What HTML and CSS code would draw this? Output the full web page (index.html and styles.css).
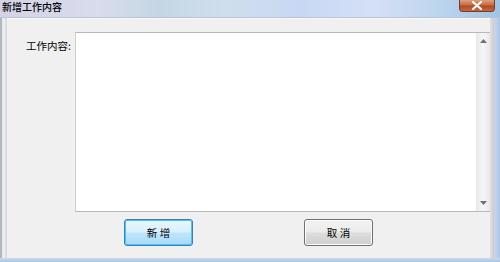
FILE: index.html
```html
<!DOCTYPE html>
<html>
<head>
<meta charset="utf-8">
<link rel="stylesheet" href="styles.css">
</head>
<body>
<div class="window">
  <div class="titlebar">
    <span class="title">新增工作内容</span>
    <span class="close"><svg width="12" height="9" viewBox="0 0 12 9"><path d="M2 1 L10 8 M10 1 L2 8" stroke="#fff" stroke-width="2.2" stroke-linecap="round"/></svg></span>
  </div>
  <div class="middle">
    <div class="frame-left"></div>
    <div class="client">
      <div class="form-row">
        <label class="label">工作内容:</label>
        <div class="textbox">
          <div class="text-area"></div>
          <div class="scrollbar">
            <div class="arrow up"><svg width="7" height="4" viewBox="0 0 7 4"><path d="M0 4 L3.5 0 L7 4Z" fill="#707070"/></svg></div>
            <div class="track"></div>
            <div class="arrow down"><svg width="7" height="4" viewBox="0 0 7 4"><path d="M0 0 L3.5 4 L7 0Z" fill="#707070"/></svg></div>
          </div>
        </div>
      </div>
      <div class="buttons">
        <button class="btn primary">新 增</button>
        <button class="btn">取 消</button>
      </div>
    </div>
    <div class="frame-right"></div>
  </div>
  <div class="frame-bottom"></div>
</div>
</body>
</html>
```
FILE: styles.css
```css
html, body {
  margin: 0;
  padding: 0;
  width: 500px;
  height: 262px;
  overflow: hidden;
  background: #f0f0f0;
  font-family: "Noto Sans CJK SC", "Liberation Sans", sans-serif;
}
.window {
  width: 500px;
  height: 262px;
  display: flex;
  flex-direction: column;
}
.titlebar {
  height: 17px;
  flex: none;
  display: flex;
  align-items: flex-start;
  justify-content: space-between;
  background: linear-gradient(90deg, #d4d2e6 0%, #d8dcec 20%, #c4d6e4 32%, #cfdeec 45%, #c8d8f4 60%, #d4e0f6 75%, #bcd4ee 88%, #9fc4e4 100%);
  border-bottom: 1px solid #b8c4d4;
}
.title {
  font-size: 10px;
  line-height: 12px;
  color: #000;
  font-weight: 500;
  padding-left: 2px;
  padding-top: 1px;
}
.close {
  width: 36px;
  height: 12px;
  margin-right: 5px;
  border-radius: 0 0 4px 4px;
  background: linear-gradient(180deg, #e0a07e 0%, #c66a44 45%, #b04a22 55%, #c66a40 100%);
  border: 1px solid #7a3a28;
  border-top: none;
  display: flex;
  align-items: center;
  justify-content: center;
  box-sizing: border-box;
}
.middle {
  flex: 1;
  display: flex;
}
.frame-left {
  width: 7px;
  flex: none;
  background: linear-gradient(90deg, #b4b8bc 0px, #b4b8bc 2px, #e6e8ea 2px, #eef0f2 5px, #c8c8c8 6px, #f0f0f0 7px);
}
.frame-right {
  width: 10px;
  flex: none;
  background: linear-gradient(90deg, #e2e2e2 0px, #d0d0d0 3px, #c4d4e8 5px, #aac6e6 10px);
}
.frame-bottom {
  height: 4px;
  flex: none;
  background: linear-gradient(180deg, #c8daec, #a8c6e4);
}
.client {
  flex: 1;
  display: flex;
  flex-direction: column;
  padding-top: 13px;
  border-top: 1px solid #fafafa;
}
.form-row {
  display: flex;
  align-items: flex-start;
}
.label {
  width: 49px;
  padding-left: 19px;
  padding-top: 8px;
  font-size: 10.5px;
  line-height: 12px;
  color: #000;
  flex: none;
}
.textbox {
  flex: 1;
  height: 180px;
  display: flex;
  border: 1px solid #b8b8b8;
  border-left-color: #d0d0d0;
  border-right: none;
  background: #fff;
  box-sizing: border-box;
}
.text-area {
  flex: 1;
  background: #fff;
}
.scrollbar {
  width: 14px;
  display: flex;
  flex-direction: column;
  background: linear-gradient(90deg, #e8e8e8, #f6f6f6 50%, #e8e8e8);
}
.arrow {
  height: 16px;
  display: flex;
  align-items: center;
  justify-content: center;
}
.track {
  flex: 1;
}
.buttons {
  display: flex;
  padding-top: 7px;
  gap: 111px;
  padding-left: 117px;
}
.btn {
  width: 69px;
  height: 27px;
  font-family: "Noto Sans CJK SC", sans-serif;
  font-size: 10.5px;
  color: #000;
  border-radius: 3px;
  border: 1px solid #707070;
  background: linear-gradient(180deg, #f2f2f2 0%, #ebebeb 48%, #dddddd 52%, #cfcfcf 100%);
  box-shadow: inset 0 0 0 1px #fcfcfc;
  padding: 0;
}
.btn.primary {
  border-color: #3c7fb1;
  background: linear-gradient(180deg, #eaf6fd 0%, #d9f0fc 48%, #bee6fd 52%, #a7d9f5 100%);
  box-shadow: inset 0 0 0 1px #48c6f9;
}
```
